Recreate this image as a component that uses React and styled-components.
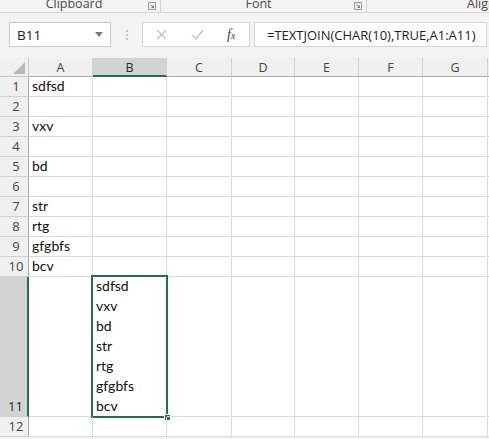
import React from "react";
import styled, { createGlobalStyle } from "styled-components";

const Global = createGlobalStyle`
  html, body { margin: 0; padding: 0; background: #f3f3f3; overflow: hidden; }
  * { box-sizing: border-box; }
`;

const Page = styled.div`
  width: 489px;
  height: 439px;
  background: #f3f3f3;
  display: flex;
  flex-direction: column;
  font-family: "Open Sans", "Noto Sans", sans-serif;
  overflow: hidden;
`;

const RibbonLabels = styled.div`
  height: 13px;
  display: grid;
  grid-template-columns: 161px 206px 1fr;
  border-bottom: 1px solid #d6d6d6;
  overflow: hidden;
`;

const RibbonGroup = styled.div`
  position: relative;
  display: flex;
  justify-content: ${(p) => (p.$align === "left" ? "flex-start" : "center")};
  padding-left: ${(p) => (p.$align === "left" ? "100px" : "0")};
  border-right: ${(p) => (p.$sep ? "1px solid #d0d0d0" : "none")};
  height: 12px;
`;

const RibbonLabel = styled.span`
  font-size: 12.5px;
  line-height: 12px;
  color: #4a4a4a;
  margin-top: -2px;
  padding-right: ${(p) => p.$pr || 0}px;
`;

const Launcher = styled.svg`
  position: absolute;
  right: 4px;
  top: 2px;
`;

const FormulaRow = styled.div`
  display: flex;
  align-items: center;
  height: 25px;
  margin-top: 9px;
  padding-left: 9px;
`;

const NameBox = styled.div`
  width: 102px;
  height: 25px;
  background: #fff;
  border: 1px solid #c9c9c9;
  display: flex;
  align-items: center;
  justify-content: space-between;
  padding: 0 7px 0 7px;
  font-size: 13.5px;
  color: #222;
`;

const Dots = styled.div`
  width: 31px;
  display: flex;
  flex-direction: column;
  align-items: center;
  gap: 2px;
  span {
    width: 2px;
    height: 2px;
    background: #c4c4c4;
  }
`;

const FxBox = styled.div`
  width: 108px;
  height: 25px;
  background: #fff;
  border: 1px solid #d4d4d4;
  display: flex;
  align-items: center;
  padding-left: 13px;
  gap: 24px;
`;

const FxText = styled.span`
  font-family: "Liberation Serif", "DejaVu Serif", serif;
  font-style: italic;
  font-size: 14px;
  color: #444;
  margin-left: -1px;
  b { font-weight: normal; font-size: 10px; }
`;

const FormulaInput = styled.div`
  flex: 1;
  height: 25px;
  margin-left: 4px;
  margin-right: 2px;
  background: #fff;
  border: 1px solid #d4d4d4;
  display: flex;
  align-items: center;
  padding-left: 12px;
  font-size: 13px;
  color: #222;
  white-space: nowrap;
  overflow: hidden;
`;

const Sheet = styled.div`
  margin-top: 11px;
  display: grid;
  grid-template-columns: 29px 64px 74px 65px 63px 64px 64px 65px 1fr;
  grid-template-rows: 19px repeat(10, 20px) 140px 20px;
  background: #fff;
`;

const Corner = styled.div`
  background: #f0f0f0;
  border-right: 1px solid #c6c6c6;
  border-bottom: 1px solid #c6c6c6;
  display: flex;
  align-items: flex-end;
  justify-content: flex-end;
  padding: 0 3px 2px 0;
`;

const ColHead = styled.div`
  background: ${(p) => (p.$active ? "#d3d3d3" : "#f0f0f0")};
  border-right: 1px solid #d0d0d0;
  border-bottom: ${(p) => (p.$active ? "2px solid #217346" : "1px solid #ababab")};
  display: flex;
  align-items: center;
  justify-content: center;
  font-size: 12.5px;
  color: ${(p) => (p.$active ? "#262626" : "#444")};
  padding-top: 1px;
`;

const RowHead = styled.div`
  background: ${(p) => (p.$active ? "#d3d3d3" : "#f0f0f0")};
  border-right: ${(p) => (p.$active ? "2px solid #217346" : "1px solid #ababab")};
  border-bottom: 1px solid #d0d0d0;
  display: flex;
  align-items: flex-end;
  justify-content: center;
  padding: 0 0 1px 4px;
  font-size: 13px;
  line-height: 18px;
  color: ${(p) => (p.$active ? "#262626" : "#444")};
`;

const Cell = styled.div`
  position: relative;
  border-right: 1px solid #dadada;
  border-bottom: 1px solid #dadada;
  display: flex;
  flex-direction: column;
  justify-content: flex-end;
  padding: 0 3px 0 3px;
  font-family: "Lato", "Liberation Sans", sans-serif;
  font-size: 14px;
  line-height: 20px;
  color: #111;
  white-space: nowrap;
`;

const Selection = styled.div`
  position: absolute;
  top: -2px;
  left: -2px;
  right: -2px;
  bottom: -2px;
  border: 2px solid #217346;
  pointer-events: none;
`;

const FillHandle = styled.div`
  position: absolute;
  right: -5px;
  bottom: -5px;
  width: 7px;
  height: 7px;
  background: #217346;
  border: 1px solid #fff;
`;

const cols = ["A", "B", "C", "D", "E", "F", "G", ""];
const colA = ["sdfsd", "", "vxv", "", "bd", "", "str", "rtg", "gfgbfs", "bcv", "", ""];
const joined = ["sdfsd", "vxv", "bd", "str", "rtg", "gfgbfs", "bcv"];

const LauncherIcon = () => (
  <Launcher width="8" height="8" viewBox="0 0 8 8">
    <path d="M0.5 0.5h7v7h-7z" fill="none" stroke="#9a9a9a" />
    <path d="M2.5 2.5l3 3M5.5 3.5v2h-2" fill="none" stroke="#777" />
  </Launcher>
);

export default function App() {
  const rows = Array.from({ length: 12 }, (_, i) => i + 1);
  return (
    <Page>
      <Global />
      <RibbonLabels>
        <RibbonGroup $sep>
          <RibbonLabel $pr={12}>Clipboard</RibbonLabel>
          <LauncherIcon />
        </RibbonGroup>
        <RibbonGroup $sep>
          <RibbonLabel $pr={10}>Font</RibbonLabel>
          <LauncherIcon />
        </RibbonGroup>
        <RibbonGroup $align="left">
          <RibbonLabel>Alignment</RibbonLabel>
        </RibbonGroup>
      </RibbonLabels>

      <FormulaRow>
        <NameBox>
          <span>B11</span>
          <svg width="8" height="5" viewBox="0 0 8 5">
            <path d="M0 0h8L4 5z" fill="#7a7a7a" />
          </svg>
        </NameBox>
        <Dots>
          <span />
          <span />
          <span />
        </Dots>
        <FxBox>
          <svg width="11" height="11" viewBox="0 0 11 11">
            <path d="M1 1l9 9M10 1l-9 9" stroke="#c2c2c2" strokeWidth="1.3" />
          </svg>
          <svg width="13" height="11" viewBox="0 0 13 11">
            <path d="M1 6l4 4 7-9" fill="none" stroke="#c2c2c2" strokeWidth="1.4" />
          </svg>
          <FxText>
            f<b>x</b>
          </FxText>
        </FxBox>
        <FormulaInput>=TEXTJOIN(CHAR(10),TRUE,A1:A11)</FormulaInput>
      </FormulaRow>

      <Sheet>
        <Corner>
          <svg width="12" height="12" viewBox="0 0 12 12">
            <path d="M12 0v12H0z" fill="#b9b9b9" />
          </svg>
        </Corner>
        {cols.map((c, i) => (
          <ColHead key={"h" + i} $active={c === "B"}>
            {c}
          </ColHead>
        ))}
        {rows.map((r) => (
          <React.Fragment key={r}>
            <RowHead $active={r === 11}>{r}</RowHead>
            <Cell>{colA[r - 1]}</Cell>
            <Cell>
              {r === 11 && joined.map((t) => <div key={t}>{t}</div>)}
              {r === 11 && (
                <Selection>
                  <FillHandle />
                </Selection>
              )}
            </Cell>
            {cols.slice(2).map((c, i) => (
              <Cell key={"c" + i} />
            ))}
          </React.Fragment>
        ))}
      </Sheet>
    </Page>
  );
}
